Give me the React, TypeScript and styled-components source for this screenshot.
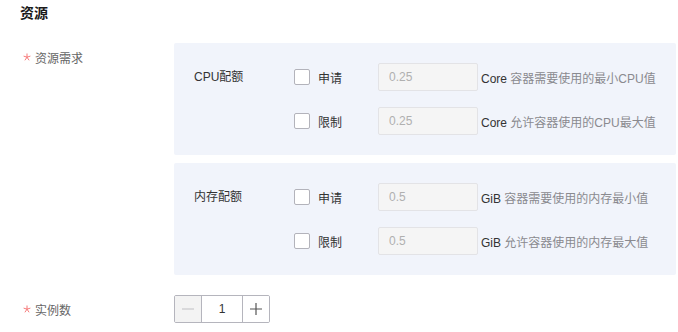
import React from "react";
import styled, { createGlobalStyle } from "styled-components";

const GlobalStyle = createGlobalStyle`
  html, body {
    margin: 0;
    padding: 0;
    background: #ffffff;
    font-family: "Liberation Sans", "Noto Sans CJK SC", sans-serif;
    font-size: 12px;
    color: #333333;
  }
  * {
    box-sizing: border-box;
  }
`;

const Page = styled.div`
  width: 678px;
  height: 332px;
  padding: 6px 2px 0 20px;
  overflow: hidden;
`;

const Title = styled.div`
  font-size: 14px;
  font-weight: bold;
  line-height: 14px;
  color: #1a1a1a;
  margin-bottom: 23px;
`;

const FormRow = styled.div<{ gap?: number }>`
  display: flex;
  align-items: flex-start;
  margin-bottom: ${({ gap }) => gap ?? 0}px;
`;

const FormLabel = styled.div`
  width: 154px;
  flex: none;
  height: 28px;
  display: flex;
  align-items: center;
  color: #666666;
  padding-left: 3px;
`;

const Star = styled.svg`
  width: 8px;
  height: 8px;
  margin-right: 4px;
  flex: none;
  color: #f56c6c;
`;

const FormBody = styled.div`
  flex: 1;
  display: flex;
  flex-direction: column;
  gap: 8px;
`;

const Panel = styled.div`
  background: #f1f4fb;
  border-radius: 2px;
  padding: 20px 20px;
  display: flex;
  align-items: flex-start;
`;

const PanelLabel = styled.div`
  width: 100px;
  flex: none;
  line-height: 28px;
  color: #333333;
`;

const PanelRows = styled.div`
  display: flex;
  flex-direction: column;
  gap: 16px;
`;

const LimitRow = styled.div`
  display: flex;
  align-items: center;
  height: 28px;
`;

const CheckLabel = styled.label`
  width: 84px;
  flex: none;
  display: flex;
  align-items: center;
  gap: 8px;
  color: #333333;
`;

const Box = styled.span`
  width: 16px;
  height: 16px;
  border: 1px solid #b3b3bb;
  border-radius: 2px;
  background: #ffffff;
`;

const ValueInput = styled.div`
  width: 100px;
  height: 28px;
  border: 1px solid #e3e3e6;
  border-radius: 2px;
  background: #f5f5f5;
  color: #b0b0b0;
  padding-left: 10px;
  line-height: 26px;
`;

const Suffix = styled.div`
  margin-left: 3px;
  color: #8a8a8f;
  white-space: nowrap;
`;

const Unit = styled.span`
  color: #333333;
`;

const Stepper = styled.div`
  display: flex;
  width: 96px;
  height: 28px;
  border: 1px solid #b5b5bd;
  border-radius: 2px;
  overflow: hidden;
`;

const StepButton = styled.div<{ disabled?: boolean }>`
  width: 26px;
  flex: none;
  display: flex;
  align-items: center;
  justify-content: center;
  background: ${({ disabled }) => (disabled ? "#f3f3f3" : "#ffffff")};
  color: ${({ disabled }) => (disabled ? "#c0c0c4" : "#555555")};
`;

const StepValue = styled.div`
  flex: 1;
  border-left: 1px solid #b5b5bd;
  border-right: 1px solid #b5b5bd;
  display: flex;
  align-items: center;
  justify-content: center;
  color: #333333;
`;

type Limit = { label: string; value: string; unit: string; desc: string };

const RequiredMark = () => (
  <Star viewBox="0 0 8 8">
    <path
      d="M4 0.5V4.2M4 4.2L0.6 3.1M4 4.2L7.4 3.1M4 4.2L1.9 7.3M4 4.2L6.1 7.3"
      stroke="currentColor"
      strokeWidth="0.9"
      fill="none"
    />
  </Star>
);

const QuotaPanel = ({ title, rows }: { title: string; rows: Limit[] }) => (
  <Panel>
    <PanelLabel>{title}</PanelLabel>
    <PanelRows>
      {rows.map((r) => (
        <LimitRow key={r.label}>
          <CheckLabel>
            <Box />
            {r.label}
          </CheckLabel>
          <ValueInput>{r.value}</ValueInput>
          <Suffix>
            <Unit>{r.unit}</Unit> {r.desc}
          </Suffix>
        </LimitRow>
      ))}
    </PanelRows>
  </Panel>
);

const StepIcon = ({ plus }: { plus?: boolean }) => (
  <svg width="14" height="14" viewBox="0 0 14 14">
    <path d="M1 7h12" stroke="currentColor" strokeWidth="1.2" />
    {plus && <path d="M7 1v12" stroke="currentColor" strokeWidth="1.2" />}
  </svg>
);

const App = () => (
  <Page>
    <GlobalStyle />
    <Title>资源</Title>
    <FormRow gap={20}>
      <FormLabel>
        <RequiredMark />
        资源需求
      </FormLabel>
      <FormBody>
        <QuotaPanel
          title="CPU配额"
          rows={[
            { label: "申请", value: "0.25", unit: "Core", desc: "容器需要使用的最小CPU值" },
            { label: "限制", value: "0.25", unit: "Core", desc: "允许容器使用的CPU最大值" },
          ]}
        />
        <QuotaPanel
          title="内存配额"
          rows={[
            { label: "申请", value: "0.5", unit: "GiB", desc: "容器需要使用的内存最小值" },
            { label: "限制", value: "0.5", unit: "GiB", desc: "允许容器使用的内存最大值" },
          ]}
        />
      </FormBody>
    </FormRow>
    <FormRow>
      <FormLabel>
        <RequiredMark />
        实例数
      </FormLabel>
      <Stepper>
        <StepButton disabled>
          <StepIcon />
        </StepButton>
        <StepValue>1</StepValue>
        <StepButton>
          <StepIcon plus />
        </StepButton>
      </Stepper>
    </FormRow>
  </Page>
);

export default App;
